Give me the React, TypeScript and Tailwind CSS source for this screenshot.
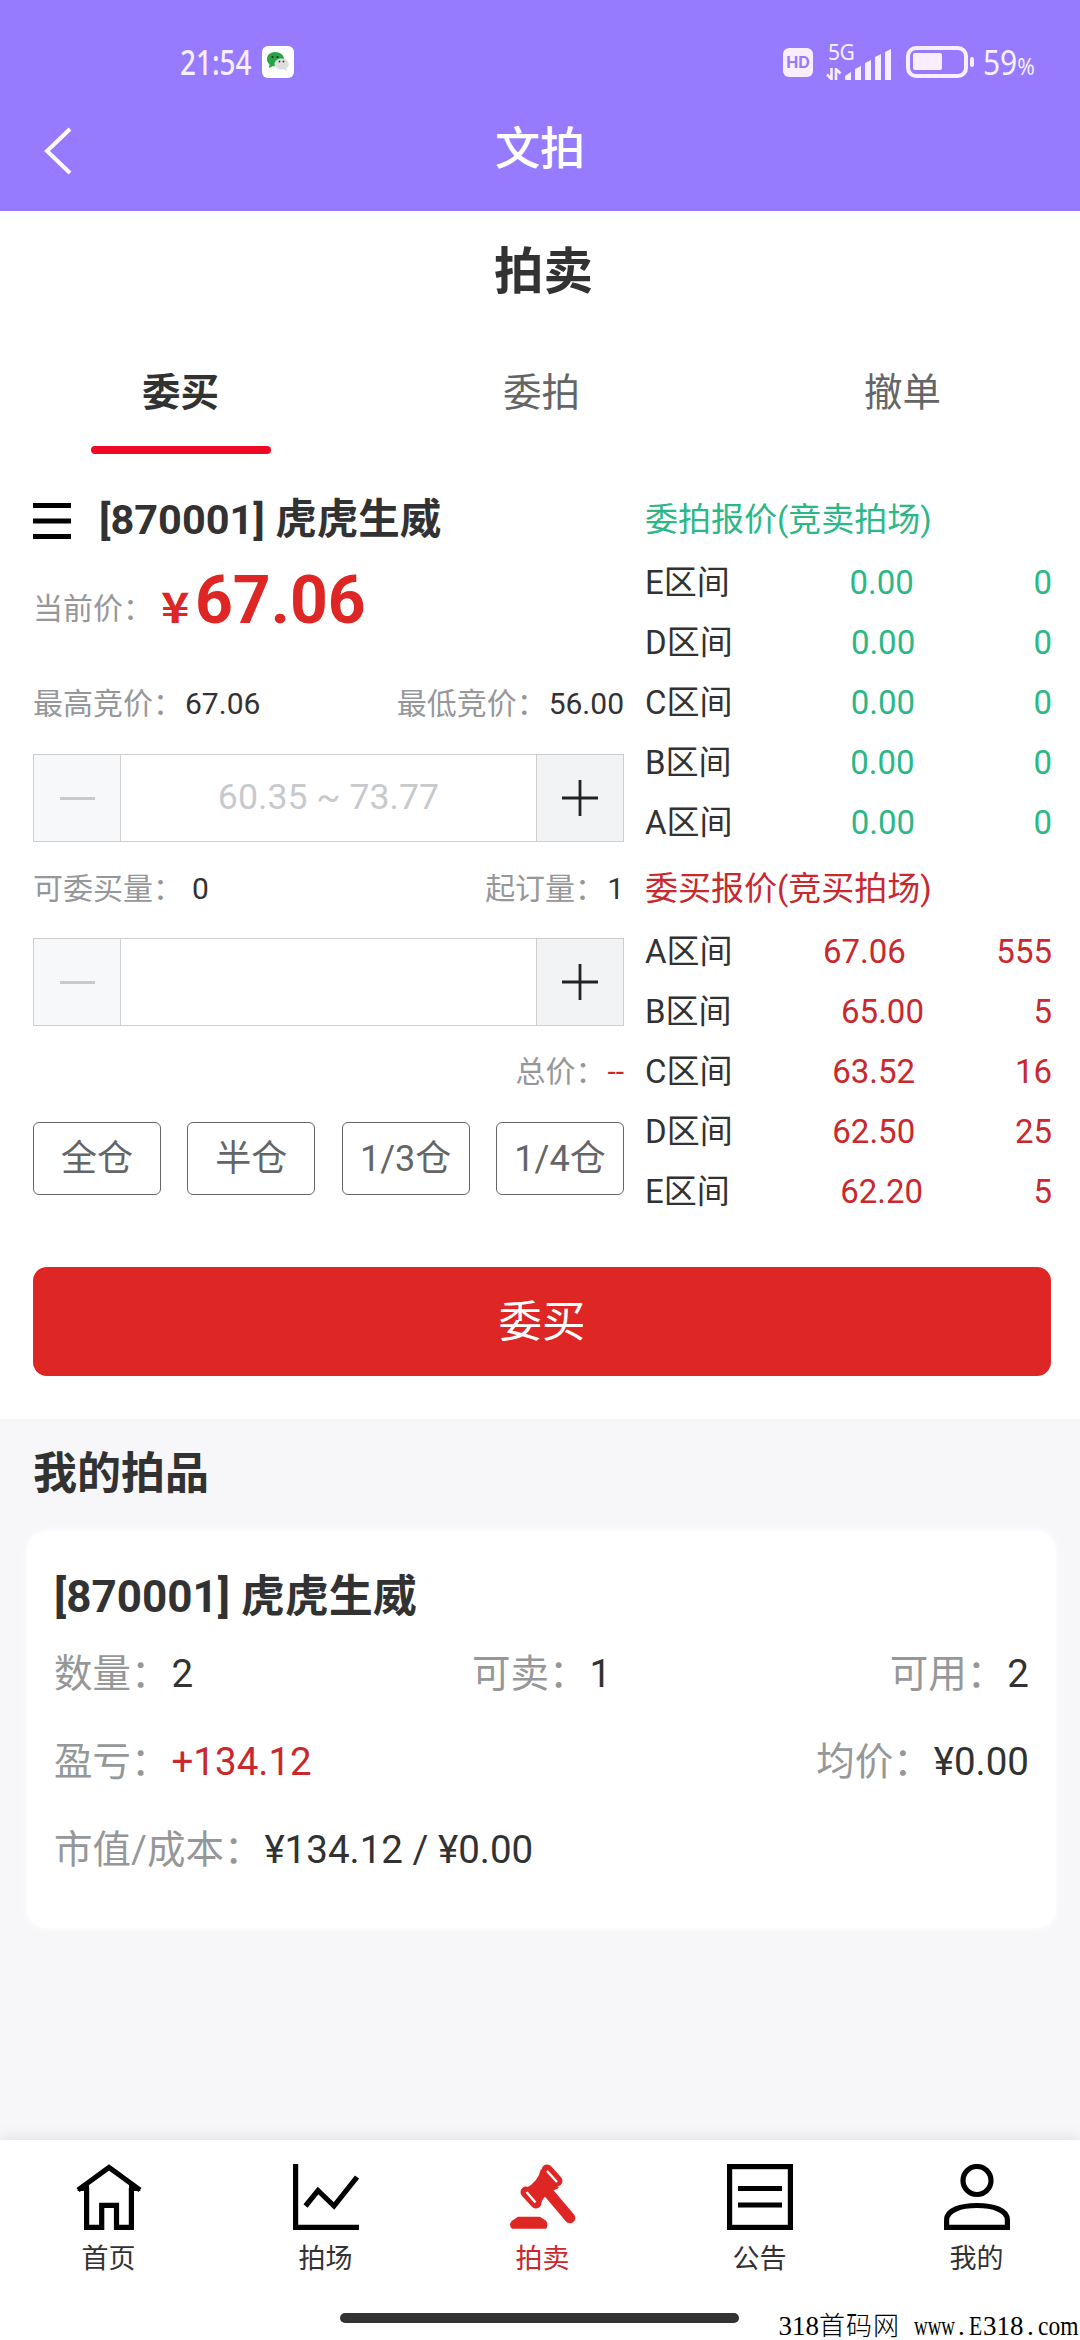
import type { ReactNode } from "react";

type Quote = { name: string; price: string; amount: string };

const sellQuotes: Quote[] = [
  { name: "E区间", price: "0.00", amount: "0" },
  { name: "D区间", price: "0.00", amount: "0" },
  { name: "C区间", price: "0.00", amount: "0" },
  { name: "B区间", price: "0.00", amount: "0" },
  { name: "A区间", price: "0.00", amount: "0" },
];

const buyQuotes: Quote[] = [
  { name: "A区间", price: "67.06", amount: "555" },
  { name: "B区间", price: "65.00", amount: "5" },
  { name: "C区间", price: "63.52", amount: "16" },
  { name: "D区间", price: "62.50", amount: "25" },
  { name: "E区间", price: "62.20", amount: "5" },
];

const positions = ["全仓", "半仓", "1/3仓", "1/4仓"];

function StatusBar() {
  return (
    <div className="flex h-[84px] items-end justify-between pl-[180px] pr-[44px] font-['Noto_Sans','Noto_Sans_CJK_SC',sans-serif] text-[#f7efff]">
      <div className="flex h-11 items-center gap-[9px]">
        <span className="w-[73px] origin-left scale-x-[0.82] whitespace-nowrap text-[34px] font-medium leading-none">
          21:54
        </span>
        <span className="flex size-8 items-center justify-center rounded-md bg-white">
          <svg width="24" height="22" viewBox="0 0 24 22">
            <path
              d="M9 1C4.500 1 1 4 1 8c0 2.400 1 4 2.500 5.300L3 17l4-2c7 1 11-2 11-7 0-4-4-7-9-7z"
              fill="#2ba245"
            />
            <path
              d="M15.500 7.500c-4 0-7 2.500-7 5.500s3 5.500 7 5.500l2.300-.3 3 1.800-.5-2.700c1.700-1.200 2.400-2.600 2.400-4.300 0-3-3.200-5.500-7.200-5.500z"
              fill="#dedede"
            />
            <circle cx="6.500" cy="6" r="1" fill="#123" />
            <circle cx="11.500" cy="6" r="1" fill="#123" />
            <circle cx="13.500" cy="10.500" r=".9" fill="#333" />
            <circle cx="17.500" cy="10.500" r=".9" fill="#333" />
          </svg>
        </span>
      </div>
      <div className="flex h-11 items-center">
        <span className="flex h-[29px] w-[30px] items-center justify-center rounded-md bg-[#f7efff] font-[Inter,sans-serif] text-[16px] font-bold text-[#977bff]">
          HD
        </span>
        <div className="ml-[13px] flex h-9 w-[66px] items-end">
          <div className="flex w-[19px] flex-col items-start">
            <span className="pl-[2px] text-[21px] leading-5 tracking-tight">5G</span>
            <svg className="mt-[6px]" width="16" height="12" viewBox="0 0 16 12">
              <path
                d="M5.500 0v11L1 6.500M10 12V1l4.500 4.500"
                fill="none"
                stroke="currentColor"
                strokeWidth="2.600"
              />
            </svg>
          </div>
          <svg width="47" height="31" viewBox="0 0 47 31">
            <path
              d="M0 31v-4l6-4v8zM10 31V20l6-3v14zM20 31V14l6-3v20zM30 31V8l6-3v26zM40 31V3l6-3v31z"
              fill="currentColor"
            />
          </svg>
        </div>
        <svg className="ml-[14px]" width="69" height="32" viewBox="0 0 69 32">
          <rect x="2" y="2" width="58" height="28" rx="8" fill="none" stroke="currentColor" strokeWidth="4" />
          <rect x="7" y="7" width="29" height="17" rx="2" fill="currentColor" />
          <rect x="64" y="11" width="4" height="10" rx="2" fill="currentColor" />
        </svg>
        <span className="ml-2 w-[53px] whitespace-nowrap leading-none">
          <span className="inline-block origin-left scale-x-[0.88] text-[34px]">
            59<span className="text-[24px]">%</span>
          </span>
        </span>
      </div>
    </div>
  );
}

function Header() {
  return (
    <header className="h-[211px] bg-[#977bff]">
      <StatusBar />
      <div className="grid h-[127px] grid-cols-3 items-center pl-[43px] pr-[43px]">
        <svg className="mt-[7px]" width="30" height="50" viewBox="0 0 30 50" fill="none">
          <path d="M27 3L4 25l23 22" stroke="#fff" strokeWidth="4" />
        </svg>
        <h1 className="pt-[5px] text-center text-[45px] font-medium leading-[60px] text-white">文拍</h1>
      </div>
    </header>
  );
}

function Tabs() {
  return (
    <div className="grid h-[124px] grid-cols-[361px_361px_361px] text-[38.500px] text-[#646566]">
      <div className="flex flex-col items-center">
        <span className="flex h-[116px] items-center pt-[10px] font-bold text-[#323233]">委买</span>
        <span className="h-2 w-[180px] rounded-full bg-[#ee0a24]" />
      </div>
      <span className="flex h-[116px] items-center justify-center pt-[10px]">委拍</span>
      <span className="flex h-[116px] items-center justify-center pt-[10px]">撤单</span>
    </div>
  );
}

function Stepper({ placeholder }: { placeholder?: string }) {
  return (
    <div className="flex h-[88px] w-[591px] border border-[#cfcfcf]">
      <button className="flex w-[87px] items-center justify-center border-r border-[#cfcfcf] bg-[#f7f8fa]">
        <span className="h-[3px] w-[35px] bg-[#c8c9cc]" />
      </button>
      <span className="flex flex-1 items-center justify-center text-[35.700px] text-[#c8c9cc]">
        {placeholder}
      </span>
      <button className="flex w-[87px] items-center justify-center border-l border-[#cfcfcf] bg-[#f2f3f5]">
        <svg width="36" height="36" viewBox="0 0 36 36">
          <path d="M0 18h36M18 0v36" stroke="#222" strokeWidth="2.800" />
        </svg>
      </button>
    </div>
  );
}

function Field({ label, children }: { label: string; children: ReactNode }) {
  return (
    <span className="flex items-center gap-[2px] whitespace-nowrap">
      <span className="text-[#969799]">{label}</span>
      {children}
    </span>
  );
}

function OrderForm() {
  return (
    <div className="flex w-[591px] flex-col text-[30px] text-[#323233]">
      <div className="flex h-[64px] items-center">
        <svg className="mt-[2px]" width="38" height="36" viewBox="0 0 38 36">
          <path d="M0 2.500h38M0 18h38M0 33.500h38" stroke="#000" strokeWidth="5" />
        </svg>
        <span className="ml-[28px] text-[41.500px] font-bold">[870001] 虎虎生威</span>
      </div>
      <div className="flex h-[92px] items-end">
        <span className="mb-[13px] leading-[44px] text-[#969799]">当前价：</span>
        <span className="mb-[8px] ml-[8px] w-[34px] origin-left scale-x-[1.150] font-['Noto_Sans_CJK_SC',sans-serif] text-[42px] font-bold leading-[62px] text-[#de2624]">
          ¥
        </span>
        <span className="text-[66px] font-bold leading-[86px] text-[#de2624]">67.06</span>
      </div>
      <div className="mt-[30px] flex h-[58px] items-center justify-between">
        <Field label="最高竞价：">67.06</Field>
        <Field label="最低竞价：">56.00</Field>
      </div>
      <div className="h-[22px]" />
      <Stepper placeholder="60.35 ~ 73.77" />
      <div className="flex h-24 items-center justify-between pb-1">
        <Field label="可委买量：">
          <span className="ml-[7px]">0</span>
        </Field>
        <Field label="起订量：">1</Field>
      </div>
      <Stepper />
      <div className="flex h-24 items-center justify-end pb-[6px]">
        <Field label="总价：">
          <span className="text-[#c9282d]">--</span>
        </Field>
      </div>
      <div className="flex justify-between">
        {positions.map((label) => (
          <button
            key={label}
            className="flex h-[73px] w-[128px] items-center justify-center rounded-md border border-[#646566] text-[36px] text-[#646566]"
          >
            {label}
          </button>
        ))}
      </div>
    </div>
  );
}

function QuoteRow({ quote }: { quote: Quote }) {
  return (
    <div className="flex h-[60px] items-center justify-between">
      <span className="text-[#323233]">{quote.name}</span>
      <span>{quote.price}</span>
      <span>{quote.amount}</span>
    </div>
  );
}

function QuoteBoard() {
  return (
    <div className="flex w-[407px] flex-col pt-px text-[33px]">
      <div className="text-[#2bb886]">
        <div className="flex h-[64px] items-center pb-[2px]">委拍报价(竞卖拍场)</div>
        {sellQuotes.map((quote) => (
          <QuoteRow key={quote.name} quote={quote} />
        ))}
      </div>
      <div className="mt-[5px] text-[#c9282d]">
        <div className="flex h-[64px] items-center pb-[2px]">委买报价(竞买拍场)</div>
        {buyQuotes.map((quote) => (
          <QuoteRow key={quote.name} quote={quote} />
        ))}
      </div>
    </div>
  );
}

function Holdings() {
  return (
    <section className="flex-1 bg-[#f7f7f9] pl-[27px] pr-[24px] pt-[22px]">
      <h3 className="h-[90px] pl-[6px] text-[44px] font-bold leading-[66px] text-[#323233]">
        我的拍品
      </h3>
      <div className="h-[397px] rounded-[20px] bg-white px-[27px] pt-[33px] text-[38.500px] text-[#323233] shadow-[0_0_8px_#ffffff]">
        <div className="h-[66px] text-[44px] font-bold leading-[66px]">[870001] 虎虎生威</div>
        <div className="flex h-[88px] items-center justify-between">
          <Field label="数量：">2</Field>
          <Field label="可卖：">1</Field>
          <Field label="可用：">2</Field>
        </div>
        <div className="flex h-[88px] items-center justify-between">
          <Field label="盈亏：">
            <span className="text-[#c9282d]">+134.12</span>
          </Field>
          <Field label="均价：">¥0.00</Field>
        </div>
        <div className="flex h-[88px] items-center">
          <Field label="市值/成本：">¥134.12 / ¥0.00</Field>
        </div>
      </div>
    </section>
  );
}

function NavItem({ label, active, children }: { label: string; active?: boolean; children: ReactNode }) {
  return (
    <div
      className={
        active
          ? "flex w-[217px] flex-col items-center text-[#c9282d]"
          : "flex w-[217px] flex-col items-center text-[#323233]"
      }
    >
      <svg width="66" height="66" viewBox="0 0 66 66" fill="none" stroke="#000" strokeWidth="5.200">
        {children}
      </svg>
      <span className="mt-[10px] text-[27px] leading-[38px]">{label}</span>
    </div>
  );
}

function BottomNav() {
  return (
    <nav className="relative h-[200px] bg-white pt-6 shadow-[0_-4px_14px_rgba(0,0,0,0.08)]">
      <div className="-mr-[5px] flex">
        <NavItem label="首页">
          <path d="M1 27h12v-9zM65 27H53v-9z" fill="#000" stroke="none" />
          <path d="M10.600 24v39.400h15.100V41.300h14.800v22.100h14.900V24" />
          <path d="M2 26L33 3.500 64 26" />
        </NavItem>
        <NavItem label="拍场">
          <path d="M2.600 0v63.400H66M12.500 42l12.500-15.500L41 42 64 13" />
        </NavItem>
        <NavItem label="拍卖" active>
          <path
            d="M2 64.700q-4-4 0-8l6-4h22l6 4q3 4 0 8z"
            fill="#de2624"
            stroke="none"
          />
          <path d="M31 5q-3 13-15 19l14 17q4-12 19-17z" fill="#de2624" stroke="none" />
          <path d="M38 28l22 26" stroke="#de2624" strokeWidth="10.500" strokeLinecap="round" />
          <path d="M37 6l10 11M16 28l10 11" stroke="#de2624" strokeWidth="11" strokeLinecap="round" />
          <path d="M37 7l10 11M16.500 28l9 10.500" stroke="#fff" strokeWidth="2.400" />
        </NavItem>
        <NavItem label="公告">
          <rect x="2.600" y="2.600" width="60.800" height="60.800" />
          <path d="M11 24.500h44M11 41h44" />
        </NavItem>
        <NavItem label="我的">
          <circle cx="33" cy="16.500" r="14" />
          <path d="M2.600 63.400V56C2.600 46 17 41.500 33 41.500S63.400 46 63.400 56v7.400z" />
        </NavItem>
      </div>
      <div className="absolute left-[340px] top-[173px] h-[10px] w-[399px] rounded-full bg-[#333]" />
      <div className="absolute right-px top-[174px] flex items-baseline whitespace-pre font-['Liberation_Serif','Noto_Sans_CJK_SC',serif] text-[27px] leading-[24px] text-black">
        <span>318</span>
        <span className="mr-[14px] text-[26px] font-light leading-[24px] tracking-[1px]">首码网</span>
        <span className="w-[41px] origin-left scale-x-[0.700]">www</span>
        <span className="w-[14px] pl-[3px]">.</span>
        <span className="w-[14px] origin-left scale-x-[0.800]">E</span>
        <span className="w-[41px]">318</span>
        <span className="w-[14px] pl-[3px]">.</span>
        <span className="w-[41px] origin-left scale-x-[0.870]">com</span>
      </div>
    </nav>
  );
}

export default function App() {
  return (
    <div className="flex h-[2340px] w-[1080px] flex-col overflow-hidden bg-white font-[Roboto,'Noto_Sans_CJK_SC',sans-serif]">
      <Header />
      <main className="flex flex-1 flex-col">
        <h2 className="h-[119px] text-center text-[49.500px] font-bold leading-[122px] text-[#323233]">
          <span className="pl-[7px]">拍卖</span>
        </h2>
        <Tabs />
        <div className="flex justify-between pl-[33px] pr-[28px] pt-[34px]">
          <OrderForm />
          <QuoteBoard />
        </div>
        <div className="h-[197px] pl-[33px] pr-[29px] pt-[45px]">
          <button className="h-[109px] w-full rounded-[14px] bg-[#de2624] pt-[2px] text-[43.500px] text-white">
            委买
          </button>
        </div>
        <Holdings />
      </main>
      <BottomNav />
    </div>
  );
}
